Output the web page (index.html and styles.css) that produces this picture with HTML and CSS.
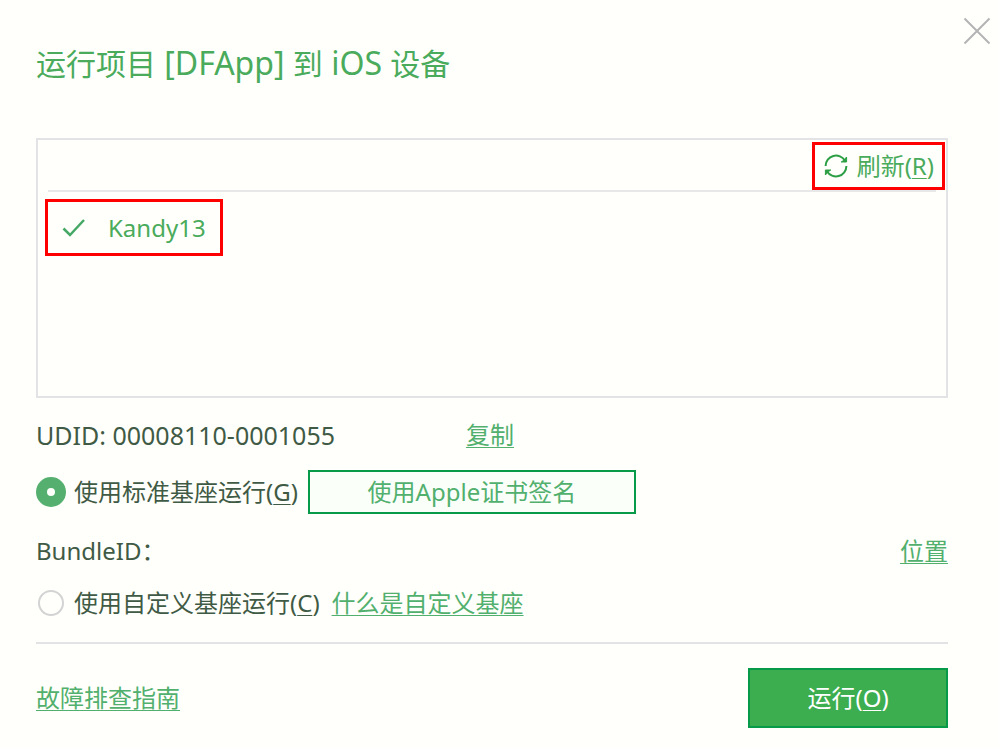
FILE: index.html
```html
<!DOCTYPE html>
<html lang="zh-CN">
<head>
  <meta charset="UTF-8" />
  <meta name="viewport" content="width=device-width, initial-scale=1.0" />
  <title>运行项目 [DFApp] 到 iOS 设备</title>
  <link rel="stylesheet" href="styles.css">
</head>

<body>
  <button class="close" type="button" aria-label="关闭">
    <svg width="28" height="28" viewBox="0 0 28 28" fill="none" stroke="#b4b4b4" stroke-width="2">
      <path d="M1.5 1.5L26.5 26.5M26.5 1.5L1.5 26.5" />
    </svg>
  </button>

  <form class="dialog">
    <h1>运行项目<span class="name"> [DFApp] </span>到<span class="name"> iOS </span>设备</h1>

    <div class="devices">
      <div class="toolbar">
        <button class="refresh marked" type="button">
          <svg width="24" height="24" viewBox="0 0 24 24" fill="none" stroke="#2c9f45" stroke-width="2">
            <path d="M1.6 12A10.4 10.4 0 0 1 21 6.8M22.4 12A10.4 10.4 0 0 1 3 17.2" />
            <path d="M22.6 3V8H17.2L19.6 6.4ZM1.4 21V16H6.8L4.4 17.6Z" fill="#2c9f45" stroke-width="1" />
          </svg>
          <span>刷新(<u>R</u>)</span>
        </button>
      </div>
      <hr class="line">
      <button class="device marked" type="button">
        <svg width="24" height="20" viewBox="0 0 24 20" fill="none" stroke="#45a866" stroke-width="2.5">
          <path d="M1.5 10.5L8 17L22 2" />
        </svg>
        <span>Kandy13</span>
      </button>
    </div>

    <div class="row udid">
      <span class="latin">UDID: 00008110-0001055</span>
      <a href="#">复制</a>
    </div>

    <div class="row standard">
      <input type="radio" name="base" id="base-standard" checked>
      <label for="base-standard">使用标准基座运行(<u>G</u>)</label>
      <button class="sign" type="button">使用Apple证书签名</button>
    </div>

    <div class="row bundle">
      <span>BundleID：</span>
      <a href="#">位置</a>
    </div>

    <div class="row custom">
      <input type="radio" name="base" id="base-custom">
      <label for="base-custom">使用自定义基座运行(<u>C</u>)</label>
      <a href="#">什么是自定义基座</a>
    </div>

    <footer>
      <a href="#">故障排查指南</a>
      <button class="run" type="submit">运行(<u>O</u>)</button>
    </footer>
  </form>
</body>
</html>
```

FILE: styles.css
```css
* {
  box-sizing: border-box;
}

body {
  margin: 0;
  background: #fffffb;
  color: #3f5a45;
  font-family: 'Noto Sans', 'Noto Sans CJK SC', sans-serif;
  font-size: 24px;
  font-weight: 400;
  line-height: 32px;
}

button {
  padding: 0;
  border: none;
  background: none;
  color: #4aab5c;
  font: inherit;
  cursor: pointer;
}

svg {
  display: block;
}

a {
  color: #52b06e;
}

a, u {
  text-decoration: underline;
  text-decoration-thickness: 1px;
  text-underline-offset: 3px;
  text-decoration-skip-ink: none;
}

.close {
  position: absolute;
  top: 17px;
  right: 8px;
}

.dialog {
  padding: 44px 51px 20px 36px;
}

h1 {
  margin: 0 0 54px;
  color: #4aab5c;
  font-size: 30px;
  font-weight: 400;
  line-height: 40px;
}

.name {
  font-size: 32px;
  line-height: 32px;
}

.devices {
  height: 260px;
  border: 2px solid #e3e3e6;
}

.toolbar {
  display: flex;
  justify-content: flex-end;
  padding: 2px 1px 0;
}

.marked {
  display: flex;
  align-items: center;
  border: 3px solid #ff0000;
}

.refresh {
  gap: 9px;
  height: 48px;
  padding: 0 8px 0 9px;
}

.line {
  height: 2px;
  margin: 0 10px;
  border: none;
  background: #e8e8e8;
}

.device {
  gap: 22px;
  height: 57px;
  margin: 7px;
  padding: 0 14px;
}

.row {
  display: flex;
  align-items: center;
}

.udid {
  margin-top: 21px;
}

.udid a {
  margin-left: 131px;
}

.latin {
  font-size: 25px;
}

.standard {
  margin-top: 19px;
}

input[type="radio"] {
  appearance: none;
  flex: none;
  width: 26px;
  height: 26px;
  margin: 0 10px 0 2px;
  border: 2px solid #d3d3d3;
  border-radius: 50%;
}

input[type="radio"]:checked {
  width: 30px;
  height: 30px;
  margin: 0 8px 0 0;
  border: 11px solid #55b06f;
  background: #fffffb;
}

.sign {
  width: 328px;
  height: 44px;
  margin-left: 10px;
  border: 2px solid #069a49;
  background: #fafffa;
  color: #52b06e;
}

.bundle {
  justify-content: space-between;
  margin-top: 21px;
}

.custom {
  margin-top: 20px;
}

.custom a {
  margin-left: 12px;
}

footer {
  display: flex;
  align-items: center;
  justify-content: space-between;
  margin-top: 23px;
  padding-top: 24px;
  border-top: 2px solid #e3e3e6;
}

.run {
  width: 200px;
  height: 60px;
  border: 2px solid #069a49;
  background: #3cae50;
  color: #fff;
}
```
